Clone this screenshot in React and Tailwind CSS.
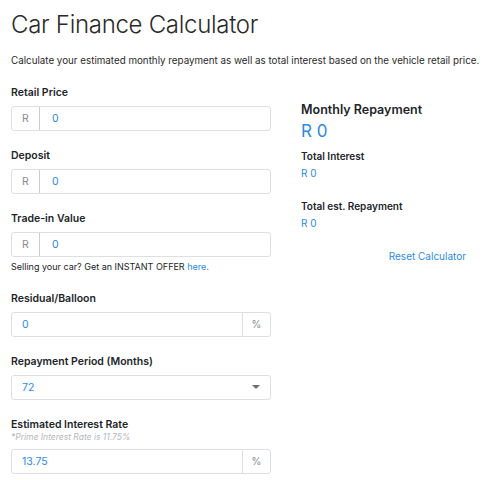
const Field = ({ label, children, className = "" }) => (
  <div className={className}>
    <p className="text-[10.5px] font-semibold leading-[16px] text-[#212529] mb-[5px]">{label}</p>
    {children}
  </div>
)

const PrefixInput = ({ value }) => (
  <div className="flex h-[25px] border border-[#dcdfe3] rounded-[3px] bg-white">
    <div className="w-[28px] flex items-center justify-center border-r border-[#c9ccd0] text-[10.5px] text-[#8a8d91]">R</div>
    <div className="flex-1 flex items-center pl-[12px] text-[10.5px] text-[#2b8ae6]">{value}</div>
  </div>
)

const SuffixInput = ({ value }) => (
  <div className="flex h-[25px] border border-[#dcdfe3] rounded-[3px] bg-white">
    <div className="flex-1 flex items-center pl-[10px] text-[10.5px] text-[#2b8ae6]">{value}</div>
    <div className="w-[28px] flex items-center justify-center border-l border-[#dcdfe3] text-[10px] text-[#8a8d91]">%</div>
  </div>
)

const App = () => {
  return (
    <div className="bg-white w-[489px] h-[480px] overflow-hidden px-[11px] pt-[10px] font-['Inter',sans-serif] text-[#212529]">
      <h1 className="text-[24px] font-light leading-[30px] tracking-[-0.3px] text-[#2a2a2a]">Car Finance Calculator</h1>
      <p className="mt-[14px] text-[9.8px] leading-[14px] text-[#2a2a2a] whitespace-nowrap">
        Calculate your estimated monthly repayment as well as total interest based on the vehicle retail price.
      </p>

      <div className="flex mt-[17px]">
        <div className="w-[260px]">
          <Field label="Retail Price" className="mb-[17px]">
            <PrefixInput value="0" />
          </Field>
          <Field label="Deposit" className="mb-[17px]">
            <PrefixInput value="0" />
          </Field>
          <Field label="Trade-in Value">
            <PrefixInput value="0" />
          </Field>
          <p className="mt-[3px] text-[9px] leading-[13px] text-[#212529]">
            Selling your car? Get an INSTANT OFFER <span className="text-[#2b8ae6]">here.</span>
          </p>
          <Field label="Residual/Balloon" className="mt-[18px] mb-[17px]">
            <SuffixInput value="0" />
          </Field>
          <Field label="Repayment Period (Months)" className="mb-[17px]">
            <div className="flex h-[25px] border border-[#dcdfe3] rounded-[3px] bg-white items-center justify-between pl-[10px] pr-[10px]">
              <span className="text-[10.5px] text-[#2b8ae6]">72</span>
              <svg width="8" height="5" viewBox="0 0 8 5"><path d="M0 0h8L4 4z" fill="#6b6e72" /></svg>
            </div>
          </Field>
          <div>
            <p className="text-[10.5px] font-semibold leading-[15px] text-[#212529]">Estimated Interest Rate</p>
            <p className="text-[8.5px] italic leading-[11px] text-[#b5b8bc] mb-[6px]">*Prime Interest Rate is 11.75%</p>
            <SuffixInput value="13.75" />
          </div>
        </div>

        <div className="ml-[30px] w-[165px] pt-[16px]">
          <p className="text-[12.5px] font-semibold leading-[18px] text-[#212529]">Monthly Repayment</p>
          <p className="text-[17px] leading-[22px] text-[#2b8ae6] mt-[1px]">R 0</p>
          <p className="mt-[7px] text-[10px] font-semibold leading-[14px] text-[#212529]">Total Interest</p>
          <p className="mt-[3px] text-[10px] leading-[14px] text-[#2b8ae6]">R 0</p>
          <p className="mt-[19px] text-[10px] font-semibold leading-[14px] text-[#212529]">Total est. Repayment</p>
          <p className="mt-[3px] text-[10px] leading-[14px] text-[#2b8ae6]">R 0</p>
          <p className="mt-[19px] text-right text-[10px] leading-[14px] text-[#2b8ae6]">Reset Calculator</p>
        </div>
      </div>
    </div>
  )
}

export default App
